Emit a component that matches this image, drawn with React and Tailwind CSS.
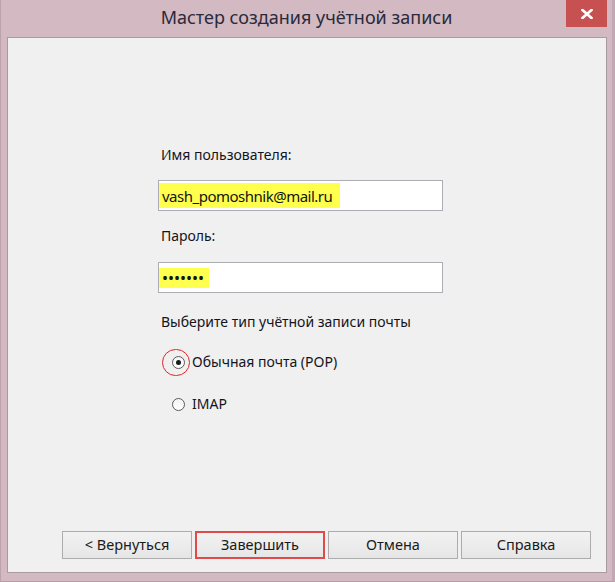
import React from "react";

function Radio({ checked }) {
  return (
    <span className="relative flex h-[13px] w-[13px] items-center justify-center rounded-full border border-[#5a5a5a] bg-gradient-to-b from-[#f4f4f4] to-[#ffffff]">
      {checked && <span className="h-[5px] w-[5px] rounded-full bg-[#1a1a1a]" />}
    </span>
  );
}

function Btn({ children, red }) {
  return (
    <div
      className={
        "flex h-[28px] w-[130px] items-center justify-center text-[14.5px] text-[#1a1a1a] bg-gradient-to-b from-[#f2f2f2] to-[#e6e6e6] " +
        (red ? "border-2 border-[#e04a4a]" : "border border-[#acacac]")
      }
    >
      {children}
    </div>
  );
}

export default function App() {
  return (
    <div
      className="flex h-[582px] w-[615px] flex-col border-l border-r-[3px] border-b border-l-[#bda2ac] border-r-[#c2a8b2] border-b-[#b89da8] bg-[#d2b9c2]"
      style={{ fontFamily: '"Noto Sans", "Open Sans", sans-serif' }}
    >
      <div className="relative flex h-[37px] shrink-0 items-center justify-center">
        <span className="text-[18px] leading-none text-[#2a2a3a] pb-[3px]">Мастер создания учётной записи</span>
        <div className="absolute right-[5px] top-0 flex h-[27px] w-[41px] items-center justify-center bg-[#c75050]">
          <svg width="12" height="10" viewBox="0 0 12 10">
            <path d="M1.5 1 L10.5 9 M10.5 1 L1.5 9" stroke="#fff" strokeWidth="2.6" strokeLinecap="square" />
          </svg>
        </div>
      </div>
      <div className="ml-[6px] mr-[5px] mb-[8px] flex flex-1 flex-col border border-[#a99ba2] bg-[#f0f0f0]">
        <div className="flex flex-col pl-[150px] pt-[107px] text-[14px] leading-[20px] text-[#141420]">
          <div className="pl-[3px]">Имя пользователя:</div>
          <div className="mt-[15px] flex h-[31px] w-[285px] items-center border border-[#abadb3] bg-white">
            <span className="flex h-[25px] w-[181px] items-center bg-[#ffff4d] pl-[3px] text-[15px] tracking-[-0.5px] text-[#141414]">
              vash_pomoshnik@mail.ru
            </span>
          </div>
          <div className="mt-[15px] pl-[3px]">Пароль:</div>
          <div className="mt-[16px] flex h-[31px] w-[285px] items-center border border-[#abadb3] bg-white">
            <span className="flex h-[20px] w-[50px] items-center bg-[#ffff4d] pl-[3px] text-[16px] text-[#141414]">
              •••••••
            </span>
          </div>
          <div className="mt-[19px] pl-[3px]">Выберите тип учётной записи почты</div>
          <div className="relative mt-[20px] flex items-center gap-[7px] pl-[14px]">
            <Radio checked />
            <span>Обычная почта (POP)</span>
            <span className="absolute left-[4px] top-[-3px] h-[27px] w-[28px] rounded-full border-[1.5px] border-[#e02424]" />
          </div>
          <div className="mt-[22px] flex items-center gap-[7px] pl-[14px]">
            <Radio />
            <span>IMAP</span>
          </div>
        </div>
        <div className="mt-auto flex gap-[3px] pb-[13px] pl-[54px]">
          <Btn>&lt; Вернуться</Btn>
          <Btn red>Завершить</Btn>
          <Btn>Отмена</Btn>
          <Btn>Справка</Btn>
        </div>
      </div>
    </div>
  );
}
